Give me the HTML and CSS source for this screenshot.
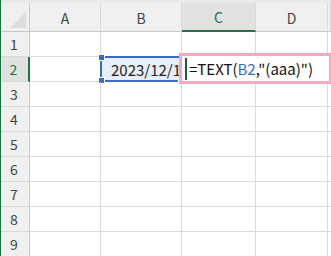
FILE: index.html
```html
<!DOCTYPE html>
<html>
<head>
<meta charset="utf-8">
<link rel="stylesheet" href="styles.css">
</head>
<body>
<div class="sheet">
  <div class="topstrip"></div>
  <div class="grid">
    <div class="corner"><span class="tri"></span></div>
    <div class="colh">A</div>
    <div class="colh">B</div>
    <div class="colh sel">C</div>
    <div class="colh">D</div>
    <div class="colh last"></div>

    <div class="rowh">1</div><div class="cell"></div><div class="cell"></div><div class="cell"></div><div class="cell"></div><div class="cell last"></div>
    <div class="rowh sel">2</div><div class="cell"></div><div class="cell b2"><span class="val">2023/12/1</span><span class="selbox"><i class="h tl"></i><i class="h bl"></i><i class="h br"></i></span></div><div class="cell c2"></div><div class="cell"></div><div class="cell last"></div>
    <div class="rowh">3</div><div class="cell"></div><div class="cell"></div><div class="cell"></div><div class="cell"></div><div class="cell last"></div>
    <div class="rowh">4</div><div class="cell"></div><div class="cell"></div><div class="cell"></div><div class="cell"></div><div class="cell last"></div>
    <div class="rowh">5</div><div class="cell"></div><div class="cell"></div><div class="cell"></div><div class="cell"></div><div class="cell last"></div>
    <div class="rowh">6</div><div class="cell"></div><div class="cell"></div><div class="cell"></div><div class="cell"></div><div class="cell last"></div>
    <div class="rowh">7</div><div class="cell"></div><div class="cell"></div><div class="cell"></div><div class="cell"></div><div class="cell last"></div>
    <div class="rowh">8</div><div class="cell"></div><div class="cell"></div><div class="cell"></div><div class="cell"></div><div class="cell last"></div>
    <div class="rowh">9</div><div class="cell"></div><div class="cell"></div><div class="cell"></div><div class="cell"></div><div class="cell last"></div>
  </div>
  <div class="edit"><span class="cursor"></span><span class="ftext">=TEXT(<span class="ref">B2</span>,"(aaa)")</span></div>
</div>
</body>
</html>
```

FILE: styles.css
```css
html, body {
  margin: 0;
  padding: 0;
  background: #ffffff;
  overflow: hidden;
}
.sheet {
  position: relative;
  width: 331px;
  height: 256px;
  border-left: 1px solid #217346;
  box-sizing: border-box;
  font-family: "Noto Sans CJK JP", "Noto Sans", sans-serif;
  overflow: hidden;
}
.topstrip {
  height: 3px;
  background: #e9e9e9;
  border-bottom: 0;
}
.grid {
  display: grid;
  grid-template-columns: 29px 71px 81px 74px 72px 1fr;
  grid-template-rows: 29px repeat(9, 25px);
}
.corner {
  position: relative;
  background: #f0f0f0;
  border-right: 1px solid #c8c8c8;
  border-bottom: 1px solid #c8c8c8;
  box-sizing: border-box;
}
.tri {
  position: absolute;
  right: 3px;
  bottom: 3px;
  width: 0;
  height: 0;
  border-left: 16px solid transparent;
  border-bottom: 16px solid #dcdcdc;
}
.colh {
  background: #f0f0f0;
  border-right: 1px solid #d9d9d9;
  border-bottom: 1px solid #c8c8c8;
  box-sizing: border-box;
  display: flex;
  align-items: center;
  justify-content: center;
  font-size: 14px;
  color: #444444;
  padding-top: 1px;
}
.colh.sel {
  background: #e1e1e1;
  color: #217346;
  border-bottom: 2px solid #217346;
}
.rowh {
  background: #f0f0f0;
  border-right: 1px solid #c8c8c8;
  border-bottom: 1px solid #d9d9d9;
  box-sizing: border-box;
  display: flex;
  align-items: center;
  justify-content: center;
  font-size: 14px;
  color: #444444;
  padding-right: 2px;
}
.rowh.sel {
  background: #e1e1e1;
  color: #217346;
  border-right: 2px solid #217346;
}
.cell {
  border-right: 1px solid #dadada;
  border-bottom: 1px solid #dadada;
  box-sizing: border-box;
  position: relative;
}
.cell.last {
  border-right: 0;
}
.b2 {
  background: #e8eef8;
  overflow: visible;
  display: flex;
  align-items: center;
}
.val {
  display: block;
  width: 70px;
  overflow: hidden;
  white-space: nowrap;
  margin-left: 10px;
  font-size: 15px;
  color: #222222;
}
.selbox {
  position: absolute;
  left: -1px;
  top: -1px;
  right: -2px;
  bottom: -1px;
  border: 2px solid #3b6cc0;
}
.h {
  position: absolute;
  width: 5px;
  height: 5px;
  background: #3b6cc0;
  border: 1px solid #ffffff;
}
.h.tl { left: -4px; top: -4px; }
.h.bl { left: -4px; bottom: -4px; }
.h.br { right: -4px; bottom: -4px; }
.edit {
  position: absolute;
  left: 178px;
  top: 53px;
  width: 153px;
  height: 31px;
  border: 3px solid #f4a8c6;
  box-sizing: border-box;
  background: #ffffff;
  display: flex;
  align-items: center;
}
.cursor {
  width: 2px;
  height: 22px;
  background: #1e5e36;
  margin-left: 3px;
}
.ftext {
  margin-left: 2px;
  font-size: 15px;
  color: #111111;
  white-space: nowrap;
}
.ref {
  color: #3a6fc4;
}
```
